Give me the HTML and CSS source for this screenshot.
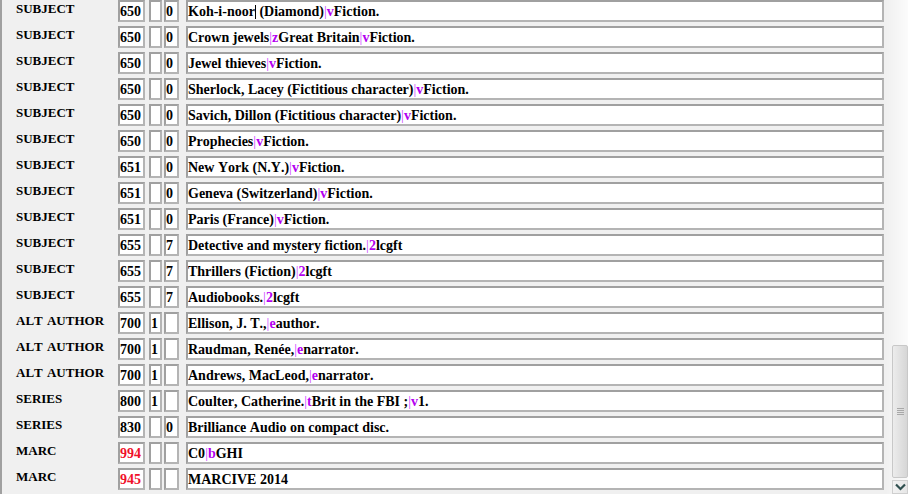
FILE: index.html
```html
<!DOCTYPE html>
<html lang="en">

<head>
    <meta charset="UTF-8">
    <title>MARC record</title>
    <link rel="stylesheet" href="styles.css">
</head>

<body>
    <div class="editor">
        <div class="fields">
            <div class="row">
                <span class="label">SUBJECT</span>
                <span class="box tag">650</span>
                <span class="box ind1"></span>
                <span class="box ind2">0</span>
                <span class="box value">Koh-i-noor<span class="caret"></span> (Diamond)<span class="sf">|</span><span class="code">v</span>Fiction.</span>
            </div>
            <div class="row">
                <span class="label">SUBJECT</span>
                <span class="box tag">650</span>
                <span class="box ind1"></span>
                <span class="box ind2">0</span>
                <span class="box value">Crown jewels<span class="sf">|</span><span class="code">z</span>Great Britain<span class="sf">|</span><span class="code">v</span>Fiction.</span>
            </div>
            <div class="row">
                <span class="label">SUBJECT</span>
                <span class="box tag">650</span>
                <span class="box ind1"></span>
                <span class="box ind2">0</span>
                <span class="box value">Jewel thieves<span class="sf">|</span><span class="code">v</span>Fiction.</span>
            </div>
            <div class="row">
                <span class="label">SUBJECT</span>
                <span class="box tag">650</span>
                <span class="box ind1"></span>
                <span class="box ind2">0</span>
                <span class="box value">Sherlock, Lacey (Fictitious character)<span class="sf">|</span><span class="code">v</span>Fiction.</span>
            </div>
            <div class="row">
                <span class="label">SUBJECT</span>
                <span class="box tag">650</span>
                <span class="box ind1"></span>
                <span class="box ind2">0</span>
                <span class="box value">Savich, Dillon (Fictitious character)<span class="sf">|</span><span class="code">v</span>Fiction.</span>
            </div>
            <div class="row">
                <span class="label">SUBJECT</span>
                <span class="box tag">650</span>
                <span class="box ind1"></span>
                <span class="box ind2">0</span>
                <span class="box value">Prophecies<span class="sf">|</span><span class="code">v</span>Fiction.</span>
            </div>
            <div class="row">
                <span class="label">SUBJECT</span>
                <span class="box tag">651</span>
                <span class="box ind1"></span>
                <span class="box ind2">0</span>
                <span class="box value">New York (N.Y.)<span class="sf">|</span><span class="code">v</span>Fiction.</span>
            </div>
            <div class="row">
                <span class="label">SUBJECT</span>
                <span class="box tag">651</span>
                <span class="box ind1"></span>
                <span class="box ind2">0</span>
                <span class="box value">Geneva (Switzerland)<span class="sf">|</span><span class="code">v</span>Fiction.</span>
            </div>
            <div class="row">
                <span class="label">SUBJECT</span>
                <span class="box tag">651</span>
                <span class="box ind1"></span>
                <span class="box ind2">0</span>
                <span class="box value">Paris (France)<span class="sf">|</span><span class="code">v</span>Fiction.</span>
            </div>
            <div class="row">
                <span class="label">SUBJECT</span>
                <span class="box tag">655</span>
                <span class="box ind1"></span>
                <span class="box ind2">7</span>
                <span class="box value">Detective and mystery fiction.<span class="sf">|</span><span class="code">2</span>lcgft</span>
            </div>
            <div class="row">
                <span class="label">SUBJECT</span>
                <span class="box tag">655</span>
                <span class="box ind1"></span>
                <span class="box ind2">7</span>
                <span class="box value">Thrillers (Fiction)<span class="sf">|</span><span class="code">2</span>lcgft</span>
            </div>
            <div class="row">
                <span class="label">SUBJECT</span>
                <span class="box tag">655</span>
                <span class="box ind1"></span>
                <span class="box ind2">7</span>
                <span class="box value">Audiobooks.<span class="sf">|</span><span class="code">2</span>lcgft</span>
            </div>
            <div class="row">
                <span class="label">ALT AUTHOR</span>
                <span class="box tag">700</span>
                <span class="box ind1">1</span>
                <span class="box ind2"></span>
                <span class="box value">Ellison, J. T.,<span class="sf">|</span><span class="code">e</span>author.</span>
            </div>
            <div class="row">
                <span class="label">ALT AUTHOR</span>
                <span class="box tag">700</span>
                <span class="box ind1">1</span>
                <span class="box ind2"></span>
                <span class="box value">Raudman, Renée,<span class="sf">|</span><span class="code">e</span>narrator.</span>
            </div>
            <div class="row">
                <span class="label">ALT AUTHOR</span>
                <span class="box tag">700</span>
                <span class="box ind1">1</span>
                <span class="box ind2"></span>
                <span class="box value">Andrews, MacLeod,<span class="sf">|</span><span class="code">e</span>narrator.</span>
            </div>
            <div class="row">
                <span class="label">SERIES</span>
                <span class="box tag">800</span>
                <span class="box ind1">1</span>
                <span class="box ind2"></span>
                <span class="box value">Coulter, Catherine.<span class="sf">|</span><span class="code">t</span>Brit in the FBI ;<span class="sf">|</span><span class="code">v</span>1.</span>
            </div>
            <div class="row">
                <span class="label">SERIES</span>
                <span class="box tag">830</span>
                <span class="box ind1"></span>
                <span class="box ind2">0</span>
                <span class="box value">Brilliance Audio on compact disc.</span>
            </div>
            <div class="row">
                <span class="label">MARC</span>
                <span class="box tag local">994</span>
                <span class="box ind1"></span>
                <span class="box ind2"></span>
                <span class="box value">C0<span class="sf">|</span><span class="code">b</span>GHI</span>
            </div>
            <div class="row">
                <span class="label">MARC</span>
                <span class="box tag local">945</span>
                <span class="box ind1"></span>
                <span class="box ind2"></span>
                <span class="box value">MARCIVE 2014</span>
            </div>
        </div>
        <div class="scrollbar">
            <div class="thumb"><span class="grip"></span></div>
            <div class="arrow">
                <svg width="11" height="8" viewBox="0 0 11 8">
                    <path d="M1 1.5 L5.5 6 L10 1.5" fill="none" stroke="#2f4f4f" stroke-width="2.2"/>
                </svg>
            </div>
        </div>
    </div>
</body>

</html>
```

FILE: styles.css
```css
html {
    margin: 0px;
    height: 100%;
}

body {
    margin: 0px;
    height: 100%;
    overflow: hidden;
    background-color: #f0f0f0;
    font-family: 'Liberation Serif', 'Times New Roman', serif;
    font-weight: bold;
    font-size: 13px;
    font-kerning: none;
    color: #000;
}

.editor {
    display: flex;
    height: 100%;
    border-left: 2px solid #a0a0a0;
    box-sizing: border-box;
}

.fields {
    flex: 1;
    display: flex;
    flex-direction: column;
    gap: 4px;
    padding-right: 2px;
}

.row {
    display: flex;
    align-items: flex-start;
    height: 22px;
}

.label {
    width: 102px;
    padding-left: 14px;
    line-height: 18px;
    white-space: nowrap;
    word-spacing: 1px;
}

.box {
    box-sizing: border-box;
    height: 22px;
    line-height: 19px;
    font-size: 14px;
    border: 2px solid #adadad;
    border-color: #a0a0a0 #b4b4b4 #b4b4b4 #a0a0a0;
    background-color: #fff;
    padding: 0;
    white-space: nowrap;
    overflow: hidden;
}

.tag {
    width: 27px;
}

.tag.local {
    color: #f0102a;
}

.ind1 {
    width: 13px;
    margin-left: 4px;
}

.ind2 {
    width: 15px;
    margin-left: 2px;
}

.value {
    flex: 1;
    margin-left: 7px;
}

.sf {
    color: #cc44ff;
    font-weight: normal;
}

.code {
    color: #b400f0;
}

.caret {
    display: inline-block;
    width: 1px;
    height: 14px;
    background-color: #000;
    vertical-align: -3px;
}

.scrollbar {
    width: 22px;
    display: flex;
    flex-direction: column;
    align-items: flex-end;
    background: linear-gradient(to right, #f0f0f0, #fbfbfb);
}

.thumb {
    margin-top: 345px;
    width: 16px;
    height: 133px;
    box-sizing: border-box;
    border: 1px solid #c8c8c8;
    border-radius: 2px;
    background: linear-gradient(to right, #ececec, #d6d6d6);
    display: flex;
    align-items: center;
    justify-content: center;
}

.grip {
    width: 7px;
    height: 7px;
    background: repeating-linear-gradient(to bottom, #a8a8a8 0, #a8a8a8 1px, transparent 1px, transparent 2px);
}

.arrow {
    margin-top: 2px;
    width: 16px;
    height: 14px;
    box-sizing: border-box;
    border: 1px solid #cfcfcf;
    background: linear-gradient(to right, #f2f2f2, #e6e6e6);
    display: flex;
    align-items: center;
    justify-content: center;
}
```
